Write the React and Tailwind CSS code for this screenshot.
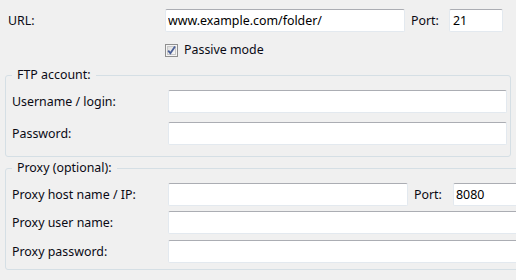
import React from 'react';

function TextBox({ value = '', className = '' }) {
  return (
    <input
      readOnly
      defaultValue={value}
      className={`h-[23px] bg-white border border-[#e3e9ef] border-t-[#abadb3] rounded-[2px] pl-[2px] text-black outline-none ${className}`}
    />
  );
}

function Row({ label, children, className = '' }) {
  return (
    <div className={`flex items-center ${className}`}>
      <span className="w-[156px] shrink-0">{label}</span>
      {children}
    </div>
  );
}

function CheckMark() {
  return (
    <svg width="13" height="13" viewBox="0 0 13 13">
      <defs>
        <linearGradient id="cb" x1="0" y1="0" x2="1" y2="1">
          <stop offset="0" stopColor="#dcdcdc" />
          <stop offset="1" stopColor="#fbfbfb" />
        </linearGradient>
      </defs>
      <rect x="0.5" y="0.5" width="12" height="12" fill="#f4f4f4" stroke="#8f8f8f" />
      <rect x="2.5" y="2.5" width="8" height="8" fill="url(#cb)" stroke="#c8c8c8" />
      <path d="M3.2 6.6 L5.4 9.2 L10 2.6" fill="none" stroke="#4a5f97" strokeWidth="1.8" />
    </svg>
  );
}

export default function App() {
  return (
    <div className="w-[516px] h-[280px] bg-[#f0f0f0] px-[5px] pt-[9px] font-['Noto_Sans','Open_Sans',sans-serif] text-[12.4px] leading-[16px] text-[#0a0a14] overflow-hidden">
      {/* URL */}
      <div className="flex items-center">
        <span className="w-[160px] pl-[3px] shrink-0">URL:</span>
        <TextBox value="www.example.com/folder/" className="w-[240px]" />
        <span className="ml-[6px] w-[38px]">Port:</span>
        <TextBox value="21" className="w-[54px] pl-[3px]" />
      </div>

      {/* Passive */}
      <div className="flex items-center mt-[11px] pl-[160px] h-[14px]">
        <CheckMark />
        <span className="ml-[6px]">Passive mode</span>
      </div>

      {/* FTP account */}
      <fieldset className="mt-[10px] border border-[#d5dfe5] rounded-[3px] pl-[6px] pr-[3px] pt-[7px] pb-[11px]">
        <legend className="px-[5px]">FTP account:</legend>
        <Row label="Username / login:">
          <TextBox className="flex-1" />
        </Row>
        <Row label="Password:" className="mt-[9px]">
          <TextBox className="flex-1" />
        </Row>
      </fieldset>

      {/* Proxy */}
      <fieldset className="mt-[3px] border border-[#d5dfe5] rounded-[3px] pl-[6px] pr-[4px] pt-[7px] pb-[6px]">
        <legend className="px-[5px]">Proxy (optional):</legend>
        <Row label="Proxy host name / IP:">
          <TextBox className="w-[240px]" />
          <span className="ml-[6px] w-[39px]">Port:</span>
          <TextBox value="8080" className="flex-1" />
        </Row>
        <Row label="Proxy user name:" className="mt-[5px]">
          <TextBox className="flex-1" />
        </Row>
        <Row label="Proxy password:" className="mt-[6px]">
          <TextBox className="flex-1" />
        </Row>
      </fieldset>
    </div>
  );
}
